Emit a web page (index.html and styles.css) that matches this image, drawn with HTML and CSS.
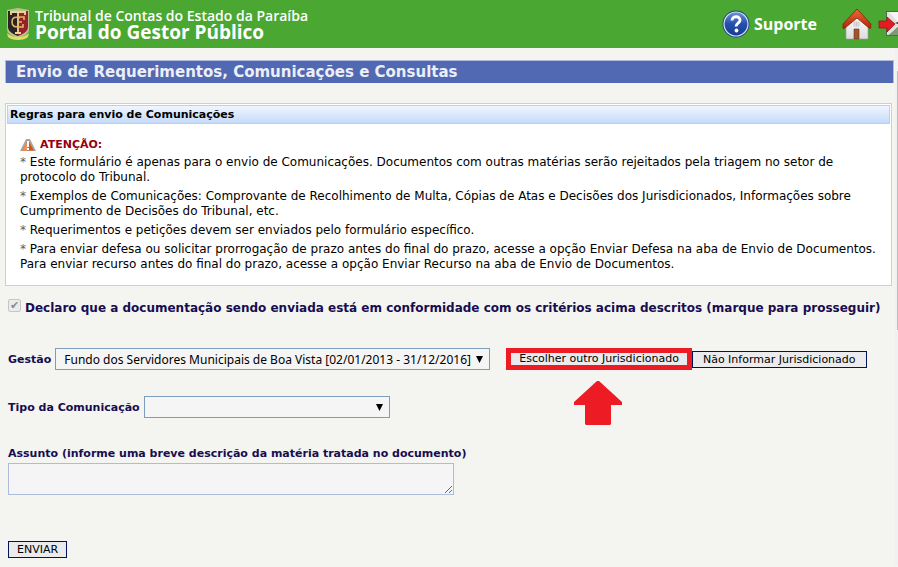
FILE: index.html
```html
<!DOCTYPE html>
<html lang="pt-BR">
<head>
  <meta charset="UTF-8">
  <meta name="viewport" content="width=device-width, initial-scale=1.0">
  <title>Portal do Gestor Público</title>
  <link rel="stylesheet" href="styles.css">
</head>
<body>

  <header class="topbar">
    <a href="#" class="brand">
      <svg class="crest" width="24" height="34" viewBox="0 0 24 34">
        <path d="M1 3l11-2 11 2v19c0 5-5 7-11 9C6 29 1 27 1 22z" fill="#b9c28e"/>
        <path d="M2 4h10v25C6 27 2 24 2 20z" fill="#2b2226"/>
        <path d="M12 4h10v16c0 4-4 7-10 9z" fill="#96202e"/>
        <path d="M4 5h16M5 5v3M19 5v3M12 4v22M9 26h6" fill="none" stroke="#ecd591" stroke-width="1.800"/>
        <path d="M14 11c-6-2-8 0-8 4s3 6 7 4M11 10h7v3M12 15h4M12 20h5v-3" fill="none" stroke="#e3b95a" stroke-width="1.600"/>
        <path d="M1 26c2 2 6 4 11 4s9-2 11-4l-1 4c-4 4-16 4-20 0z" fill="#e2dc62"/>
      </svg>
      <span class="brand-text">
        <span class="brand-org">Tribunal de Contas do Estado da Paraíba</span>
        <span class="brand-name">Portal do Gestor Público</span>
      </span>
    </a>
    <nav class="top-links">
      <a href="#" class="support">
        <svg width="28" height="28" viewBox="0 0 28 28">
          <defs>
            <linearGradient id="ball" x1="0" y1="0" x2="0" y2="1">
              <stop offset="0" stop-color="#6f93d8"/>
              <stop offset="0.5" stop-color="#2450ad"/>
              <stop offset="1" stop-color="#173a91"/>
            </linearGradient>
          </defs>
          <circle cx="14" cy="14" r="13.500" fill="#1b3d85"/>
          <circle cx="14" cy="14" r="12" fill="url(#ball)" stroke="#d5dff2" stroke-width="1.200"/>
          <path d="M10 10.500c0-5 8.500-5 8 0c-.3 2.500-4 3-4 6" fill="none" stroke="#fff" stroke-width="2.800"/>
          <circle cx="14.500" cy="20.500" r="1.900" fill="#fff"/>
        </svg>
        <span>Suporte</span>
      </a>
      <a href="#" class="home" aria-label="Início">
        <svg width="30" height="32" viewBox="0 0 30 32">
          <defs>
            <linearGradient id="roof" x1="0" y1="0" x2="0" y2="1">
              <stop offset="0" stop-color="#ee6a3c"/>
              <stop offset="1" stop-color="#b32404"/>
            </linearGradient>
            <linearGradient id="wall" x1="0" y1="0" x2="0" y2="1">
              <stop offset="0" stop-color="#fff"/>
              <stop offset="1" stop-color="#dcdcdc"/>
            </linearGradient>
          </defs>
          <path d="M4 17L15 6l11 11v14H4z" fill="url(#wall)" stroke="#999" stroke-width="0.600"/>
          <path d="M12 21h5v10h-5z" fill="#a3532a" stroke="#71351a" stroke-width="0.600"/>
          <path d="M12 14h5v4h-5zM14.500 14v4M12 16h5" fill="#eee" stroke="#bbb" stroke-width="0.700"/>
          <path d="M15 1L29 16l-.5 4.500-1.500-.5L15 10 3 20l-2 .5V16z" fill="url(#roof)" stroke="#82200b" stroke-width="0.800"/>
        </svg>
      </a>
      <a href="#" class="exit" aria-label="Sair">
        <svg width="20" height="30" viewBox="0 0 20 30">
          <path d="M8 2h12v25H8z" fill="#4f6a4a"/>
          <path d="M9 3h11v15l-9 8H9z" fill="#dfe2dd"/>
          <path d="M11 3h9v10z" fill="#f7f8f6"/>
          <path d="M11 26l9-8v8z" fill="#7f9a79"/>
          <path d="M17 14l3-1v2z" fill="#333"/>
          <path d="M1 12h8V8l8 7-8 8v-4H1z" fill="#e51b23" stroke="#a80c12" stroke-width="0.800"/>
        </svg>
      </a>
    </nav>
  </header>

  <div class="scroll-area">
    <main class="content">
      <h1>Envio de Requerimentos, Comunicações e Consultas</h1>

      <section class="panel">
        <h2>Regras para envio de Comunicações</h2>
        <div class="panel-body">
          <p class="warning">
            <svg width="16" height="14" viewBox="0 0 16 14">
              <path d="M6 1h4l6 12H0z" fill="#a8a8a8"/>
              <path d="M8 2l6 10.500H2z" fill="#d9560f"/>
              <path d="M8 2v10.500H2z" fill="#ee9057"/>
              <path d="M7 3h2v6H7zM7 10h2v2H7z" fill="#fff"/>
            </svg>
            <strong>ATENÇÃO:</strong>
          </p>
          <p><span class="star">*</span> Este formulário é apenas para o envio de Comunicações. Documentos com outras matérias serão rejeitados pela triagem no setor de<br>protocolo do Tribunal.</p>
          <p><span class="star">*</span> Exemplos de Comunicações: Comprovante de Recolhimento de Multa, Cópias de Atas e Decisões dos Jurisdicionados, Informações sobre<br>Cumprimento de Decisões do Tribunal, etc.</p>
          <p><span class="star">*</span> Requerimentos e petições devem ser enviados pelo formulário específico.</p>
          <p><span class="star">*</span> Para enviar defesa ou solicitar prorrogação de prazo antes do final do prazo, acesse a opção Enviar Defesa na aba de Envio de Documentos.<br>Para enviar recurso antes do final do prazo, acesse a opção Enviar Recurso na aba de Envio de Documentos.</p>
        </div>
      </section>

      <form>
        <div class="agree">
          <input type="checkbox" id="declaro" checked disabled>
          <label for="declaro">Declaro que a documentação sendo enviada está em conformidade com os critérios acima descritos (marque para prosseguir)</label>
        </div>

        <div class="row">
          <label for="gestao">Gestão</label>
          <select id="gestao" class="gestao">
            <option>Fundo dos Servidores Municipais de Boa Vista [02/01/2013 - 31/12/2016]</option>
          </select>
          <div class="buttons">
            <div class="highlight">
              <button type="button">Escolher outro Jurisdicionado</button>
              <svg class="arrow" width="48" height="44" viewBox="0 0 48 44">
                <path d="M23 0h2l23 21v3H37v19l-1 1H12l-1-1V24H0v-3z" fill="#ed1c24"/>
              </svg>
            </div>
            <button type="button">Não Informar Jurisdicionado</button>
          </div>
        </div>

        <div class="row">
          <label for="tipo">Tipo da Comunicação</label>
          <select id="tipo" class="tipo">
            <option></option>
          </select>
        </div>

        <div class="field">
          <label for="assunto">Assunto (informe uma breve descrição da matéria tratada no documento)</label>
          <textarea id="assunto"></textarea>
        </div>

        <button type="submit">ENVIAR</button>
      </form>
    </main>
    <div class="scrollbar"><div class="thumb"></div></div>
  </div>

</body>
</html>
```

FILE: styles.css
```css
* {
  box-sizing: border-box;
}

body {
  margin: 0;
  background: #f4f5f0;
  color: #000;
  font-family: "DejaVu Sans", Verdana, sans-serif;
  font-size: 11px;
  overflow: hidden;
}

a {
  color: #fff;
  text-decoration: none;
}

svg {
  display: block;
}

/* top bar */
.topbar {
  display: flex;
  justify-content: space-between;
  height: 48px;
  background: #4aa832;
  font-family: "Open Sans", sans-serif;
}

.brand {
  display: flex;
  align-items: center;
  gap: 5px;
  padding-left: 6px;
}

.brand-text span {
  display: block;
  line-height: 16px;
  white-space: nowrap;
}

.brand-org {
  font-size: 14px;
  font-weight: 600;
}

.brand-name {
  font-size: 19px;
  font-weight: 700;
}

.top-links {
  display: flex;
  align-items: center;
}

.support {
  display: flex;
  align-items: center;
  gap: 4px;
  margin-right: 25px;
  font-size: 16px;
  font-weight: 700;
}

.home {
  margin-right: 6px;
}

/* page */
.scroll-area {
  display: flex;
}

.content {
  flex: 1;
  padding: 12px 0 8px 5px;
}

h1 {
  margin: 0 1px 20px 0;
  padding: 0 10px;
  border: 1px solid #b4b9e0;
  border-bottom: 0;
  background: #5069b2;
  color: #eceef8;
  font-size: 15px;
  line-height: 22px;
}

.panel {
  margin-right: 3px;
  padding: 1px;
  border: 1px solid #bbd2f3;
  background: #fff;
}

h2 {
  margin: 0;
  padding: 0 2px;
  border: 1px solid #b9d0f4;
  background: linear-gradient(#f0f6ff, #c5dbfa);
  font-size: 11px;
  line-height: 17px;
}

.panel-body {
  padding: 13px 13px 8px;
  font-size: 12px;
  line-height: 15px;
}

.panel-body p {
  margin: 0 0 4px;
  white-space: nowrap;
}

.panel-body .warning {
  display: flex;
  align-items: center;
  gap: 4px;
  margin: 0 0 3px;
  color: #96000f;
  font-size: 11px;
}

.star {
  color: #446677;
}

/* form */
form {
  padding-left: 3px;
}

label {
  color: #170d50;
  font-weight: bold;
  white-space: nowrap;
}

.agree {
  display: flex;
  align-items: flex-start;
  gap: 4px;
  height: 18px;
  margin: 13px 0 31px;
  font-size: 12px;
  line-height: 18px;
}

.agree input {
  appearance: none;
  width: 13px;
  height: 13px;
  margin: 0;
  border: 1px solid #c6c6c6;
  border-radius: 2px;
  background: #ebebeb;
}

.agree input::before {
  content: "✔";
  display: block;
  color: #8c8c8c;
  font-size: 11px;
  line-height: 11px;
  text-align: center;
}

.row {
  display: flex;
  align-items: center;
  gap: 4px;
  margin-bottom: 26px;
}

select {
  appearance: none;
  height: 22px;
  padding: 0 8px;
  border: 1px solid #7b9ebd;
  border-radius: 0;
  background: #f5f5f5 url("data:image/svg+xml,%3Csvg xmlns='http://www.w3.org/2000/svg' width='7' height='7'%3E%3Cpath d='M0 0h7L3.500 7z'/%3E%3C/svg%3E") no-repeat right 6px center;
  color: #000;
  font-family: "Noto Sans", Tahoma, sans-serif;
  font-size: 12px;
}

.gestao {
  width: 435px;
}

.tipo {
  width: 246px;
}

.buttons {
  display: flex;
  align-items: center;
  margin-left: 12px;
}

button {
  height: 17px;
  padding: 0 8px;
  border: 1px solid #00145a;
  background: #ebebed;
  color: #000;
  font-family: "DejaVu Sans", Verdana, sans-serif;
  font-size: 11px;
  line-height: 13px;
  white-space: nowrap;
}

.buttons button {
  padding: 0 10px;
}

.highlight {
  position: relative;
  border: 5px solid #ed1c24;
}

.highlight button {
  display: block;
  height: 12px;
  padding: 0 8px;
  border: 0;
  line-height: 12px;
}

.arrow {
  position: absolute;
  top: 28px;
  left: 63px;
}

.field {
  padding-top: 2px;
}

.field label {
  display: block;
  line-height: 16px;
}

textarea {
  display: block;
  width: 446px;
  height: 32px;
  margin: 1px 0 46px;
  border: 1px solid #adbbdd;
  background: #f5f5f5;
}

/* edge of the page scrollbar */
.scrollbar {
  width: 3px;
  padding: 23px 0 0 2px;
  background: #f1f1f1;
}

.thumb {
  height: 259px;
  background: #bcbcbc;
}
```
